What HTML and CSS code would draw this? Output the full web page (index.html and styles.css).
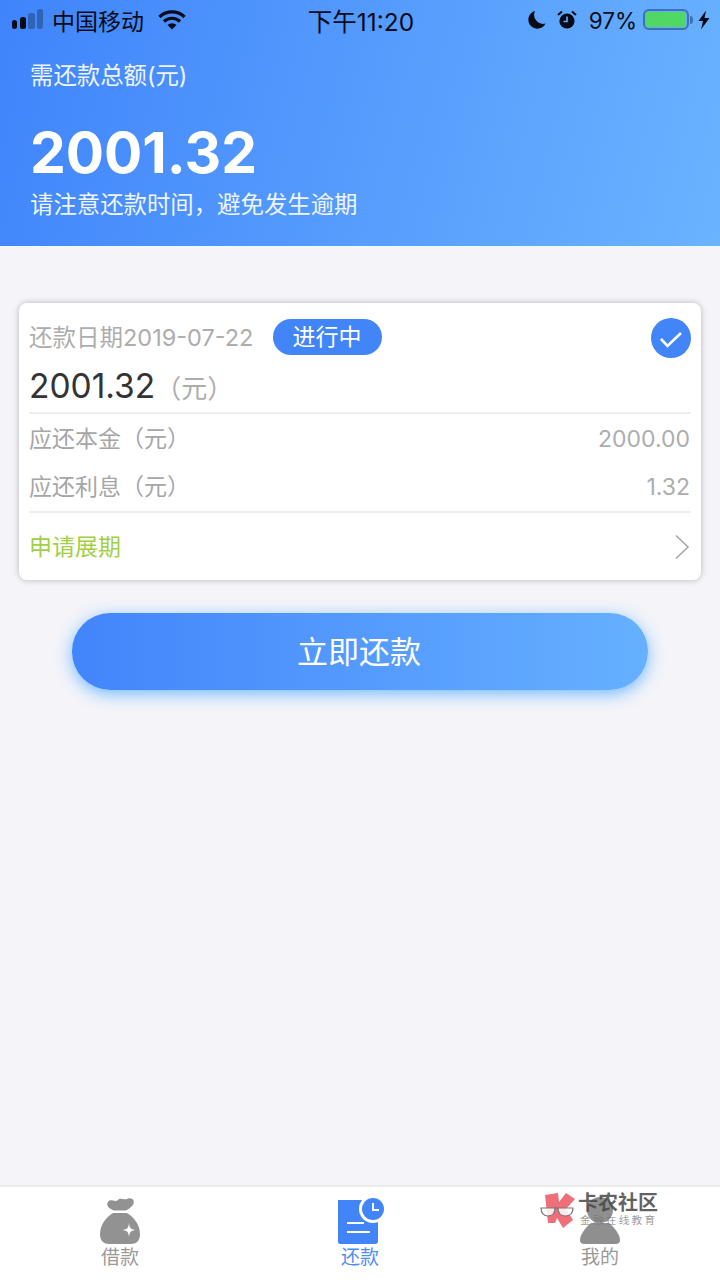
FILE: index.html
```html
<!DOCTYPE html>
<html lang="zh-CN">

<head>
    <meta charset="UTF-8">
    <meta name="viewport" content="width=device-width, initial-scale=1.0">
    <title>还款</title>
    <link rel="stylesheet" href="styles.css">
</head>

<body>
    <div class="page">
        <header class="hero">
            <div class="status-bar">
                <div class="status-left">
                    <svg class="signal" width="32" height="20" viewBox="0 0 32 20">
                        <rect x="0" y="11" width="5" height="9" rx="2.5" fill="#050b18"/>
                        <rect x="8" y="8" width="6" height="12" rx="2.5" fill="#050b18"/>
                        <rect x="16" y="4" width="7" height="16" rx="2.5" fill="#2f63b4"/>
                        <rect x="25" y="0" width="6" height="20" rx="3" fill="#2f63b4"/>
                    </svg>
                    <span class="carrier">中国移动</span>
                    <svg class="wifi" width="28" height="20" viewBox="0 0 28 20">
                        <path d="M1.5 7A18 18 0 0 1 26.5 7" fill="none" stroke="#050b18" stroke-width="3.2"/>
                        <path d="M6 11.5A11.5 11.5 0 0 1 22 11.5" fill="none" stroke="#050b18" stroke-width="3.2"/>
                        <path d="M9.5 15A6.5 6.5 0 0 1 18.5 15L14 19.5Z" fill="#050b18"/>
                    </svg>
                </div>
                <div class="status-time">下午11:20</div>
                <div class="status-right">
                    <svg width="18" height="20" viewBox="0 0 18 20">
                        <path d="M7 1A9 9 0 1 0 17.500 13.500A9 9 0 0 1 7 1Z" fill="#050b18"/>
                    </svg>
                    <svg class="alarm" width="20" height="20" viewBox="0 0 20 20">
                        <circle cx="10" cy="11" r="7.6" fill="#050b18"/>
                        <path d="M10 6.5V11.5H6.5" fill="none" stroke="#6aa9f5" stroke-width="1.6"/>
                        <path d="M1 5L5 1.5M19 5L15 1.5" stroke="#050b18" stroke-width="2"/>
                    </svg>
                    <span class="battery-pct">97%</span>
                    <span class="battery"><span class="battery-fill"></span></span>
                    <span class="battery-tip"></span>
                    <svg class="bolt" width="12" height="20" viewBox="0 0 12 20">
                        <path d="M8 0.500L0.500 11H5L3 19.500L11.500 8H6.500Z" fill="#050b18"/>
                    </svg>
                </div>
            </div>
            <p class="hero-label">需还款总额(元)</p>
            <div class="hero-amount">2001.32</div>
            <p class="hero-note">请注意还款时间，避免发生逾期</p>
        </header>

        <main class="content">
            <section class="card">
                <div class="card-head">
                    <span class="date">还款日期2019-07-22</span>
                    <span class="tag">进行中</span>
                    <svg class="check" width="40" height="40" viewBox="0 0 40 40">
                        <circle cx="20" cy="20" r="20" fill="#4285f8"/>
                        <path d="M10 21L16.5 28L30 15" fill="none" stroke="#fff" stroke-width="2.6"/>
                    </svg>
                </div>
                <div class="card-amount">2001.32<span class="unit">（元）</span></div>
                <div class="row row-first">
                    <span class="row-label">应还本金（元）</span>
                    <span class="row-value">2000.00</span>
                </div>
                <div class="row">
                    <span class="row-label">应还利息（元）</span>
                    <span class="row-value">1.32</span>
                </div>
                <div class="row row-link">
                    <span class="row-label extend">申请展期</span>
                    <svg class="chevron" width="16" height="26" viewBox="0 0 16 26">
                        <path d="M2 1.5L14 13L2 24.5" fill="none" stroke="#a8a8a8" stroke-width="1.6"/>
                    </svg>
                </div>
            </section>
            <button class="pay-btn">立即还款</button>
        </main>

        <nav class="tabbar">
            <div class="tab">
                <svg width="42" height="48" viewBox="0 0 42 48">
                    <path d="M9 5C12 1 16 6 19 3C22 0 25 4 29 1.500C34 0 37 5 33 9C31 11 29 12.500 27 13.500H15C12 12.500 6 9 9 5Z" fill="#929292"/>
                    <path d="M14 16H28C35 20 41 28 41 37C41 44 37 47 32 47H10C5 47 1 44 1 37C1 28 7 20 14 16Z" fill="#929292"/>
                    <path d="M30 26C30.600 31 31.500 32 36 33C31.500 34 30.600 35 30 40C29.400 35 28.500 34 24 33C28.500 32 29.400 31 30 26Z" fill="#fff"/>
                </svg>
                <span>借款</span>
            </div>
            <div class="tab tab-active">
                <svg width="48" height="48" viewBox="0 0 48 48">
                    <path d="M2 3H42V44C42 46 41 47 39 47H4C3 47 2 46 2 45Z" fill="#4285f8"/>
                    <circle cx="37" cy="12" r="14" fill="#fff"/>
                    <circle cx="37" cy="12" r="11" fill="#4285f8"/>
                    <path d="M37 6V13H43" fill="none" stroke="#fff" stroke-width="2"/>
                    <path d="M11 26H28M11 35H34" stroke="#fff" stroke-width="2"/>
                </svg>
                <span>还款</span>
            </div>
            <div class="tab">
                <svg width="42" height="48" viewBox="0 0 42 48">
                    <circle cx="21" cy="13" r="13" fill="#8f8f8f"/>
                    <path d="M12 26H30C36 31 41 38 41 43C41 46 39 47 36 47H6C3 47 1 46 1 43C1 38 6 31 12 26Z" fill="#8f8f8f"/>
                </svg>
                <span>我的</span>
            </div>
        </nav>

        <div class="watermark">
            <svg width="36" height="37" viewBox="0 0 36 37">
                <path d="M5 3L18 1L19 10L26 1L35 7L26 17L33 28L23 36L17 26L15 31L8 31Z" fill="#ee6f78"/>
                <path d="M1 16H15C15 21 12 24 8 24C4 24 1 21 1 16ZM18 16H33C33 21 30 24 25.500 24C21 24 18 21 18 16Z" fill="#fff" fill-opacity="0.85" stroke="#777" stroke-width="1.200"/>
                <path d="M15 16H18" stroke="#777" stroke-width="1.200"/>
            </svg>
            <div class="watermark-text">
                <div class="watermark-title">卡农社区</div>
                <div class="watermark-sub">金融在线教育</div>
            </div>
        </div>
    </div>
</body>

</html>
```
FILE: styles.css
```css
/* General styling */
* {
    box-sizing: border-box;
}

body {
    margin: 0;
    padding: 0;
    font-family: Inter, "Noto Sans CJK SC", sans-serif;
    background: #f4f4f9;
}

.page {
    position: relative;
    width: 720px;
    height: 1280px;
    display: flex;
    flex-direction: column;
    overflow: hidden;
}

/* Header */
.hero {
    height: 246px;
    padding: 0 30px;
    color: #fff;
    background: linear-gradient(105deg, #4084fb 0%, #6ab3ff 100%);
}

.status-bar {
    display: flex;
    align-items: center;
    justify-content: space-between;
    height: 40px;
    margin: 0 -20px 0 -18px;
    color: #050b18;
    font-size: 23px;
}

.status-left,
.status-right {
    display: flex;
    align-items: center;
    width: 260px;
}

.status-right {
    justify-content: flex-end;
}

.signal {
    margin-top: -2px;
}

.carrier {
    margin-left: 8px;
}

.wifi {
    margin-left: 14px;
}

.status-time {
    font-size: 24.5px;
}

.alarm {
    margin-left: 11px;
}

.battery-pct {
    margin-left: 12px;
    font-size: 22.5px;
}

.battery {
    display: block;
    width: 46px;
    height: 21px;
    margin-top: -1px;
    margin-left: 6px;
    padding: 1px;
    border: 2px solid #3d72b4;
    border-radius: 6px;
}

.battery-fill {
    display: block;
    height: 100%;
    background: #4fd964;
    border-radius: 2px;
}

.battery-tip {
    width: 3px;
    height: 8px;
    margin-left: 1px;
    background: #3d72b4;
    border-radius: 0 3px 3px 0;
}

.bolt {
    margin-left: 5px;
}

.hero-label {
    margin: 20px 0 0;
    font-size: 23.4px;
    line-height: 32px;
    color: #eef5ff;
}

.hero-amount {
    margin-top: 26px;
    font-size: 56.8px;
    font-weight: 700;
    line-height: 70px;
}

.hero-note {
    margin: 1px 0 0;
    font-size: 23.4px;
    line-height: 32px;
    color: #eef5ff;
}

/* Card */
.content {
    flex: 1;
    padding: 57px 19px 0;
}

.card {
    height: 277px;
    padding: 15px 10px 0;
    background: #fff;
    border-radius: 8px;
    box-shadow: 0 0 6px rgba(0, 0, 0, 0.25);
}

.card-head {
    display: flex;
    align-items: center;
    height: 40px;
}

.date {
    padding-bottom: 4px;
    font-size: 23.5px;
    color: #adadad;
}

.tag {
    width: 109px;
    height: 36px;
    margin-left: 20px;
    margin-top: -2px;
    padding-right: 2px;
    font-size: 23px;
    line-height: 36px;
    text-align: center;
    color: #fff;
    background: #4285f8;
    border-radius: 18px;
}

.check {
    margin-left: auto;
}

.card-amount {
    height: 56px;
    font-size: 33.5px;
    line-height: 56px;
    color: #333;
    border-bottom: 2px solid #eeeeee;
}

.unit {
    font-size: 26px;
    color: #adadad;
}

.row {
    display: flex;
    align-items: center;
    justify-content: space-between;
    height: 48px;
    font-size: 23px;
    color: #a6a6a6;
}

.row-first {
    height: 49px;
}

.row-label {
    padding-bottom: 4px;
}

.row-value {
    margin-right: 1px;
    color: #adadad;
}

.row-link {
    height: 69px;
    border-top: 2px solid #eeeeee;
}

.chevron {
    margin-right: 1px;
}

.extend {
    color: #a2cf45;
}

/* Button */
.pay-btn {
    display: block;
    width: 576px;
    height: 77px;
    margin: 33px auto 0;
    padding: 0 2px 4px 0;
    border: none;
    border-radius: 38px;
    font-family: inherit;
    font-size: 31px;
    color: #fff;
    background: linear-gradient(90deg, #4285fb 0%, #66b0ff 100%);
    box-shadow: 0 4px 16px rgba(100, 180, 255, 0.9);
}

/* Bottom tabs */
.tabbar {
    display: flex;
    height: 95px;
    padding-top: 10px;
    background: #fff;
    border-top: 2px solid #ececec;
}

.tab {
    flex: 1;
    display: flex;
    flex-direction: column;
    align-items: center;
    font-size: 19px;
    line-height: 26px;
    color: #999;
}

.tab-active {
    color: #4f8cf2;
}

/* Watermark */
.watermark {
    position: absolute;
    left: 540px;
    top: 1192px;
    display: flex;
    gap: 2px;
}

.watermark-title {
    font-size: 20px;
    font-weight: 700;
    line-height: 22px;
    color: rgba(70, 70, 70, 0.85);
}

.watermark-sub {
    padding-left: 2px;
    font-size: 10.5px;
    line-height: 14px;
    letter-spacing: 2.4px;
    color: rgba(120, 120, 120, 0.75);
}
```
